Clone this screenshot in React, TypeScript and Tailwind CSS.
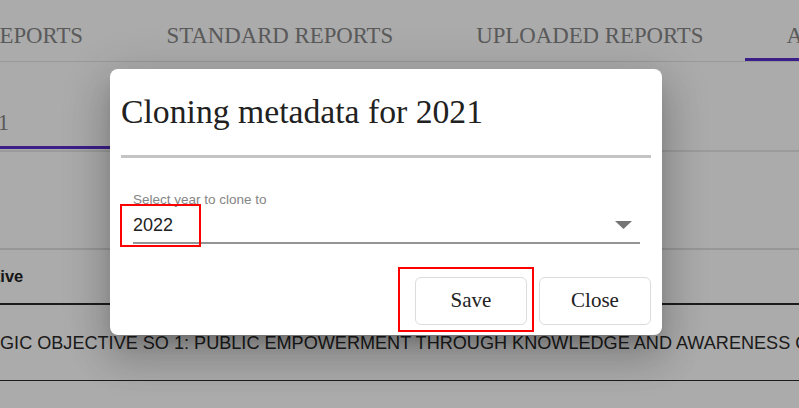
const serif = "font-['Liberation_Serif',serif]";
const sans = "font-['Liberation_Sans',Arial,sans-serif]";

function Tab({ label, active }: { label: string; active?: boolean }) {
  return (
    <div className="relative h-[61px] shrink-0 px-[41.5px] pt-[25px]">
      <span className="text-[22.8px] leading-none text-[#878787]">{label}</span>
      {active && <div className="absolute bottom-0 left-0 right-0 h-[3px] bg-[#582ecb]" />}
    </div>
  );
}

export default function App() {
  return (
    <div className={`relative h-screen w-full overflow-hidden bg-white ${sans}`}>
      {/* page behind the dialog */}
      <div className={`flex whitespace-nowrap ${serif}`}>
        <div className="flex h-[61px] w-[125px] shrink-0 justify-end overflow-hidden pr-[42px] pt-[25px]">
          <span className="shrink-0 text-[22.8px] leading-none text-[#878787]">ANNUAL REPORTS</span>
        </div>
        <Tab label="STANDARD REPORTS" />
        <Tab label="UPLOADED REPORTS" />
        <Tab label="ARCHIVED REPORTS" active />
      </div>
      <div className="h-px bg-[#e4e4e4]" />

      <div className={`h-[84px] pt-[50px] ${serif}`}>
        <div className="-ml-[36px] text-[22.5px] leading-none text-[#878787]">2021</div>
      </div>
      <div className="h-[3px] w-[180px] bg-[#582ecb]" />
      <div className="mt-px h-[2px] bg-[#e8e8e8]" />

      <div className="mt-[96px] h-[2px] bg-[#e2e2e2]" />
      <div className="h-[53px] pt-[18px] whitespace-nowrap">
        <div className="-ml-[51px] text-[16.5px] leading-none font-bold text-[#222]">Objective</div>
      </div>
      <div className="h-[2px] bg-[#2a2a2a]" />
      <div className="h-[75px] pt-[29px] whitespace-nowrap">
        <div className="-ml-[70px] text-[18.1px] leading-none text-[#2a2a2a]">
          STRATEGIC OBJECTIVE SO 1: PUBLIC EMPOWERMENT THROUGH KNOWLEDGE AND AWARENESS CREATION
        </div>
      </div>
      <div className="h-px bg-[#2a2a2a]" />

      {/* backdrop */}
      <div className="absolute inset-0 bg-black/33" />

      {/* dialog */}
      <div className="absolute left-[110px] top-[69px] flex h-[266px] w-[552px] flex-col rounded-[8px] bg-white px-[11px] shadow-[0_11px_15px_-7px_rgba(0,0,0,0.2),0_24px_38px_3px_rgba(0,0,0,0.14),0_9px_46px_8px_rgba(0,0,0,0.12)]">
        <h2 className={`pt-[26px] text-[33.7px] leading-none text-[#212121] ${serif}`}>
          Cloning metadata for 2021
        </h2>
        <div className="mt-[26.3px] h-[3px] bg-[#c4c4c4]" />

        <div className="ml-[12px] mt-[35px] w-[507px]">
          <div className="text-[13.5px] leading-none text-[#858585]">Select year to clone to</div>
          <div className="mt-[9px] flex items-center justify-between">
            <span className="text-[18px] leading-none text-[#222]">2022</span>
            <svg width="17" height="8" viewBox="0 0 17 8" className="mr-[8px]">
              <polygon points="0,0 17,0 8.5,8" fill="#757575" />
            </svg>
          </div>
          <div className="mt-[8px] h-[2px] bg-[#949494]" />
        </div>

        <div className="mt-[33px] flex justify-end gap-[12px]">
          <button className={`h-[48px] w-[112px] rounded-[6px] border border-[#dcdcdc] bg-white text-[21px] text-[#222] ${serif}`}>
            Save
          </button>
          <button className={`h-[48px] w-[112px] rounded-[6px] border border-[#dcdcdc] bg-white text-[21px] text-[#222] ${serif}`}>
            Close
          </button>
        </div>
      </div>

      {/* annotation boxes */}
      <div className="absolute left-[120px] top-[204px] h-[43px] w-[81px] border-2 border-[#f00]" />
      <div className="absolute left-[398px] top-[267px] h-[65px] w-[136px] border-2 border-[#f00]" />
    </div>
  );
}
